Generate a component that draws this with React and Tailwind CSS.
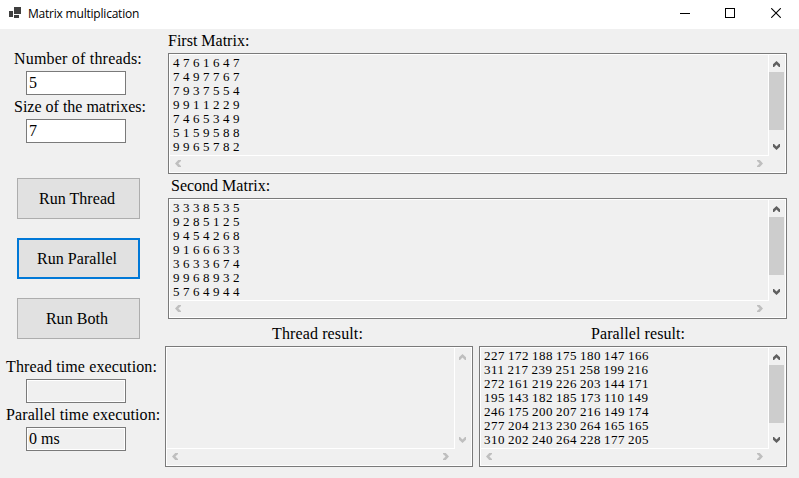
const FIRST = [
  "4 7 6 1 6 4 7",
  "7 4 9 7 7 6 7",
  "7 9 3 7 5 5 4",
  "9 9 1 1 2 2 9",
  "7 4 6 5 3 4 9",
  "5 1 5 9 5 8 8",
  "9 9 6 5 7 8 2",
];

const SECOND = [
  "3 3 3 8 5 3 5",
  "9 2 8 5 1 2 5",
  "9 4 5 4 2 6 8",
  "9 1 6 6 6 3 3",
  "3 6 3 3 6 7 4",
  "9 9 6 8 9 3 2",
  "5 7 6 4 9 4 4",
];

const PARALLEL = [
  "227 172 188 175 180 147 166",
  "311 217 239 251 258 199 216",
  "272 161 219 226 203 144 171",
  "195 143 182 185 173 110 149",
  "246 175 200 207 216 149 174",
  "277 204 213 230 264 165 165",
  "310 202 240 264 228 177 205",
];

const ARROWS = {
  up: { box: "0 0 7 6", size: "h-[6px] w-[7px]", d: "M3.5 0 7 3.2V6H6L3.5 3.4 1 6H0V3.2Z" },
  down: { box: "0 0 7 6", size: "h-[6px] w-[7px]", d: "M3.5 6 7 2.8V0H6L3.5 2.6 1 0H0V2.8Z" },
  left: { box: "0 0 6 7", size: "h-[7px] w-[6px]", d: "M0 3.5 3.2 0H6V1L3.4 3.5 6 6V7H3.2Z" },
  right: { box: "0 0 6 7", size: "h-[7px] w-[6px]", d: "M6 3.5 2.8 0H0V1L2.6 3.5 0 6V7H2.8Z" },
};

function Arrow({ dir, dim }) {
  const { box, size, d } = ARROWS[dir];
  return (
    <svg
      viewBox={box}
      className={`shrink-0 ${size} ${dim ? "text-[#bfbfbf]" : "text-[#606060]"}`}
      fill="currentColor"
    >
      <path d={d} />
    </svg>
  );
}

function Label({ className = "", children }) {
  return <div className={`h-5 shrink-0 whitespace-nowrap leading-5 ${className}`}>{children}</div>;
}

function Field({ className = "", children }) {
  return (
    <div className={`ml-[26px] h-6 w-[100px] shrink-0 border border-[#7a7a7a] pl-[2px] leading-[22px] ${className}`}>
      {children}
    </div>
  );
}

function RunButton({ className = "", focused, children }) {
  return (
    <button
      className={`ml-[17px] flex h-[41px] w-[123px] shrink-0 items-center justify-center bg-[#e1e1e1] pr-[3px] tracking-[0.05px] ${
        focused ? "border-2 border-[#0078d7]" : "border border-[#adadad]"
      } ${className}`}
    >
      {children}
    </button>
  );
}

function MatrixBox({ className = "", rows = [] }) {
  const empty = rows.length === 0;
  return (
    <div className={`h-[121px] shrink-0 border border-[#7a7a7a] ${className}`}>
      <div className="flex h-full flex-col border border-white">
        <div className="flex h-[101px]">
          <div className="flex-1 overflow-hidden border-r border-b border-white pt-px pl-[3px] text-[13px] leading-[14px] tracking-[0.5px] whitespace-nowrap [word-spacing:-0.75px]">
            {rows.map((row, i) => (
              <div key={i}>{row}</div>
            ))}
          </div>
          <div className="flex w-4 flex-col">
            <div className="h-[17px] pt-[6px] pl-[4px]">
              <Arrow dir="up" dim={empty} />
            </div>
            <div className={`h-[58px] w-[15px] ${empty ? "" : "bg-[#cdcdcd]"}`} />
            <div className="mt-auto pb-[6px] pl-[4px]">
              <Arrow dir="down" dim={empty} />
            </div>
          </div>
        </div>
        <div className="flex h-4 items-start justify-between pt-1 pr-[22px] pl-[5px]">
          <Arrow dir="left" dim />
          <Arrow dir="right" dim />
        </div>
      </div>
    </div>
  );
}

function TitleBar() {
  return (
    <header className="flex h-[29px] items-start bg-white">
      <svg className="mt-[7px] ml-[9px] h-[11px] w-3" viewBox="0 0 12 11" fill="#3f3f3f" shapeRendering="crispEdges">
        <path d="M0 4h4v6H0zM5 0h7v7H5zM5 8h5v3H5z" />
      </svg>
      <div className="ml-[7px] h-5 pt-1 font-['Open_Sans','Noto_Sans',sans-serif] text-[12px] leading-5 tracking-[-0.21px]">
        Matrix multiplication
      </div>
      <div className="mt-2 mr-[18px] ml-auto flex">
        <svg className="mr-[35px] h-[10px] w-[10px]" viewBox="0 0 10 10" shapeRendering="crispEdges">
          <path d="M0 5h10v1H0z" />
        </svg>
        <svg className="mr-[36px] h-[10px] w-[10px]" viewBox="0 0 10 10" fill="none" stroke="#000" shapeRendering="crispEdges">
          <path d="M.5.5h9v9h-9z" />
        </svg>
        <svg className="h-[10px] w-[10px]" viewBox="0 0 10 10" fill="none" stroke="#000" strokeWidth="1.1">
          <path d="m.2.2 9.6 9.6M9.8.2.2 9.8" />
        </svg>
      </div>
    </header>
  );
}

export default function App() {
  return (
    <div className="flex h-[478px] w-[799px] flex-col overflow-hidden bg-[#f0f0f0] font-['Liberation_Serif',serif] text-[16px] text-black">
      <TitleBar />
      <main className="flex flex-1">
        <section className="flex w-[165px] flex-col pt-5">
          <Label className="ml-[14px] tracking-[0.2px]">Number of threads:</Label>
          <Field className="mt-[2px] bg-white">5</Field>
          <Label className="mt-[2px] ml-[14px]">Size of the matrixes:</Label>
          <Field className="mt-[2px] bg-white">7</Field>
          <RunButton className="mt-[35px]">Run Thread</RunButton>
          <RunButton className="mt-[19px]" focused>Run Parallel</RunButton>
          <RunButton className="mt-[19px]">Run Both</RunButton>
          <Label className="mt-[18px] ml-[6px] tracking-[0.12px]">Thread time execution:</Label>
          <Field className="mt-[2px] shadow-[inset_0_0_0_1px_#fff]" />
          <Label className="mt-[2px] ml-[6px] tracking-[0.1px]">Parallel time execution:</Label>
          <Field className="mt-[2px] shadow-[inset_0_0_0_1px_#fff]">0 ms</Field>
        </section>
        <section className="flex w-[622px] flex-col pt-[2px]">
          <Label className="ml-[3px]">First Matrix:</Label>
          <MatrixBox className="mt-[2px] ml-[3px]" rows={FIRST} />
          <Label className="mt-[2px] ml-[6px]">Second Matrix:</Label>
          <MatrixBox className="mt-[2px] ml-[3px]" rows={SECOND} />
          <div className="mt-[5px] flex gap-[6px]">
            <div className="w-[308px]">
              <Label className="ml-[107px] tracking-[0.12px]">Thread result:</Label>
              <MatrixBox className="mt-[2px]" />
            </div>
            <div className="w-[308px]">
              <Label className="ml-[112px] tracking-[0.08px]">Parallel result:</Label>
              <MatrixBox className="mt-[2px]" rows={PARALLEL} />
            </div>
          </div>
        </section>
      </main>
    </div>
  );
}
